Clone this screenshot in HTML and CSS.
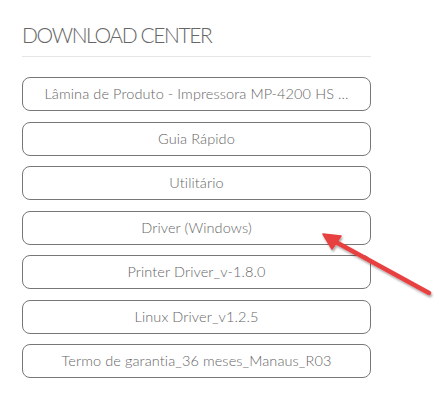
FILE: index.html
```html
<!DOCTYPE html>
<html lang="en">
<head>
    <meta charset="UTF-8">
    <title>Download Center</title>
    <link rel="stylesheet" href="styles.css">
</head>
<body>
    <div class="downloads">
        <h2 class="downloads-title">DOWNLOAD CENTER</h2>

        <ul class="download-list">
            <li><a class="download-btn" href="#">Lâmina de Produto - Impressora MP-4200 HS ...</a></li>
            <li><a class="download-btn" href="#">Guia Rápido</a></li>
            <li><a class="download-btn" href="#">Utilitário</a></li>
            <li><a class="download-btn" href="#">Driver (Windows)</a></li>
            <li><a class="download-btn" href="#">Printer Driver_v-1.8.0</a></li>
            <li><a class="download-btn" href="#">Linux Driver_v1.2.5</a></li>
            <li><a class="download-btn" href="#">Termo de garantia_36 meses_Manaus_R03</a></li>
        </ul>
    </div>

    <!-- annotation arrow pointing at the windows driver -->
    <svg class="pointer-arrow" width="439" height="413" viewBox="0 0 439 413">
        <defs>
            <filter id="arrowShadow" x="-20%" y="-20%" width="140%" height="140%">
                <feDropShadow dx="1" dy="2" stdDeviation="1.2" flood-color="#000" flood-opacity="0.35"/>
            </filter>
        </defs>
        <g filter="url(#arrowShadow)" fill="#e8403f" stroke="#e8403f">
            <line x1="429" y1="293" x2="334" y2="241" stroke-width="4.5" stroke-linecap="round"/>
            <polygon points="323,234 341,236 332,249" stroke-width="1.5" stroke-linejoin="round"/>
        </g>
    </svg>
</body>
</html>
```

FILE: styles.css
```css
* {
    margin: 0;
    padding: 0;
    box-sizing: border-box;
}

body {
    font-family: 'Lato', 'Liberation Sans', sans-serif;
    background: #fff;
    color: #777;
}

.downloads {
    width: 349px;
    margin-left: 22px;
    padding-top: 22px;
}

.downloads-title {
    font-size: 21px;
    font-weight: 300;
    color: #666;
    letter-spacing: -1.4px;
    line-height: 26px;
    padding-bottom: 8px;
    border-bottom: 1px solid #e6e6e6;
    margin-bottom: 20px;
}

.download-list {
    list-style: none;
    display: flex;
    flex-direction: column;
    gap: 10.5px;
}

.download-btn {
    display: block;
    height: 34px;
    line-height: 32px;
    border: 1px solid #777;
    border-radius: 8px;
    text-align: center;
    font-size: 14.5px;
    font-weight: 300;
    letter-spacing: 0.1px;
    color: #666;
    text-decoration: none;
    white-space: nowrap;
    overflow: hidden;
}

.pointer-arrow {
    position: absolute;
    left: 0;
    top: 0;
    pointer-events: none;
}
```
